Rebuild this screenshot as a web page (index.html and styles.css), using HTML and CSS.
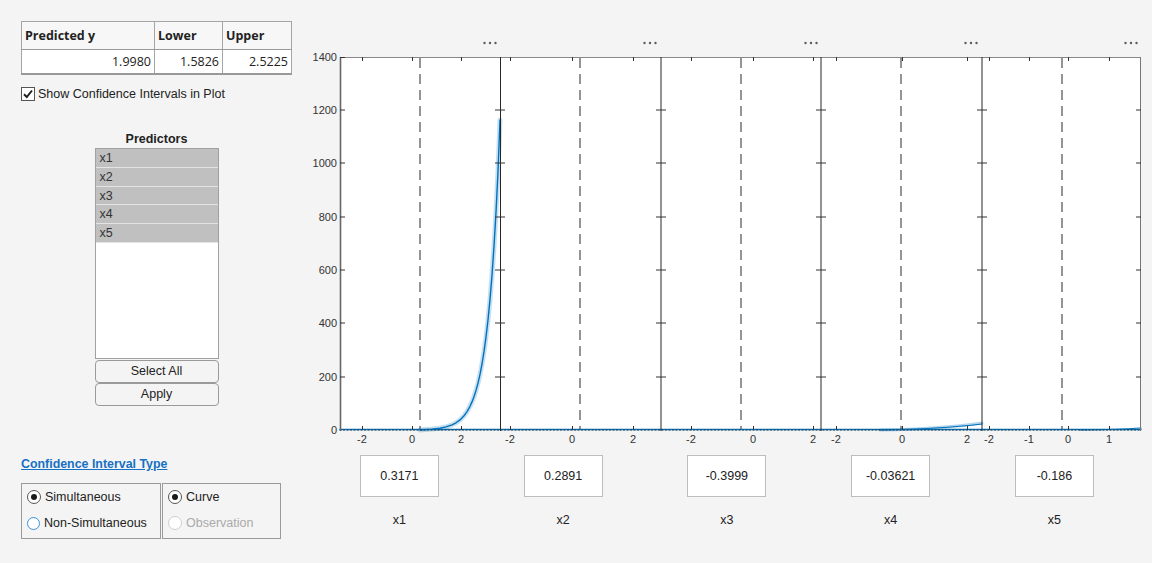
FILE: index.html
```html
<!DOCTYPE html>
<html>
<head>
<meta charset="utf-8">
<link rel="stylesheet" href="styles.css">
</head>
<body>
<div class="app">
  <div class="left">
    <table class="result">
      <tr class="head"><th class="c1">Predicted y</th><th class="c2">Lower</th><th class="c3">Upper</th></tr>
      <tr><td>1.9980</td><td>1.5826</td><td>2.5225</td></tr>
    </table>
    <label class="check">
      <span class="box"><svg width="14" height="14" viewBox="0 0 14 14"><rect x="0.5" y="0.5" width="13" height="13" fill="#fff" stroke="#555"/><path d="M3 7.2 L5.8 10 L11 3.5" fill="none" stroke="#222" stroke-width="2"/></svg></span>
      Show Confidence Intervals in Plot
    </label>
    <div class="predictors">
      <div class="ptitle">Predictors</div>
      <div class="listbox">
        <div class="item">x1</div>
        <div class="item">x2</div>
        <div class="item">x3</div>
        <div class="item">x4</div>
        <div class="item">x5</div>
      </div>
      <div class="btn">Select All</div>
      <div class="btn">Apply</div>
    </div>
    <div class="citype">Confidence Interval Type</div>
    <div class="groups">
      <div class="group g1">
        <div class="radio"><span class="rb on"></span>Simultaneous</div>
        <div class="radio"><span class="rb focus"></span>Non-Simultaneous</div>
      </div>
      <div class="group g2">
        <div class="radio"><span class="rb on"></span>Curve</div>
        <div class="radio dis"><span class="rb off"></span>Observation</div>
      </div>
    </div>
  </div>
  <div class="right">
    <svg class="chart" width="852" height="445" viewBox="300 0 852 445">
      <g fill="#fff"><rect x="340" y="57" width="801" height="373"/></g>
      <!-- dashed reference lines -->
      <g stroke="#7a7a7a" stroke-width="1.6" stroke-dasharray="10 6">
        <line x1="420" y1="58" x2="420" y2="430"/>
        <line x1="580" y1="58" x2="580" y2="430"/>
        <line x1="741" y1="58" x2="741" y2="430"/>
        <line x1="901" y1="58" x2="901" y2="430"/>
        <line x1="1062" y1="58" x2="1062" y2="430"/>
      </g>
      <!-- curves -->
      <g fill="none" stroke-linejoin="round" stroke-linecap="round">
        <polyline stroke="rgba(0,114,189,0.22)" stroke-width="5" points="420,430 432,429.1 440,428.2 446,426.9 452,424.9 456,422.8 460,419.9 464,415.8 467,411.6 470,406.3 472,401.9 474,396.7 476,390.4 478,383.1 480,374.4 482,364 484,351.7 486,337.2 488,319.9 490,299.4 492,275.1 494,246.3 496,212.2 498,171.6 500,120"/>
        <polyline stroke="#0072BD" stroke-width="1.4" points="420,430 432,429.1 440,428.2 446,426.9 452,424.9 456,422.8 460,419.9 464,415.8 467,411.6 470,406.3 472,401.9 474,396.7 476,390.4 478,383.1 480,374.4 482,364 484,351.7 486,337.2 488,319.9 490,299.4 492,275.1 494,246.3 496,212.2 498,171.6 500,120"/>
        <path d="M880 430 Q940 429 982 423" stroke="rgba(0,114,189,0.3)" stroke-width="3"/>
        <path d="M880 430 Q940 429 982 424" stroke="#0072BD" stroke-width="1.2"/>
        <path d="M1080 430 Q1120 429.5 1141 428" stroke="#0072BD" stroke-width="1.2"/>
        <line x1="340" y1="429.5" x2="1141" y2="429.5" stroke="#0072BD" stroke-width="1.4"/>
        <line x1="340" y1="430" x2="1141" y2="430" stroke="#333" stroke-width="1" stroke-dasharray="1 2.5"/>
      </g>
      <!-- frame -->
      <g stroke="#262626" fill="none">
        <line x1="340.5" y1="57" x2="340.5" y2="431" stroke="#666" stroke-width="1.6"/>
        <line x1="340" y1="57.5" x2="1141" y2="57.5" stroke="#888"/>
        <line x1="1140.5" y1="57" x2="1140.5" y2="431" stroke="#777"/>
        <line x1="500.5" y1="57" x2="500.5" y2="431"/>
        <line x1="661" y1="57" x2="661" y2="431"/>
        <line x1="821" y1="57" x2="821" y2="431"/>
        <line x1="982" y1="57" x2="982" y2="431"/>
      </g>
      <!-- y ticks -->
      <g stroke="#333" stroke-width="1">
        <path d="M340 110h5M340 163h5M340 217h5M340 270h5M340 323h5M340 377h5M340 57.5h5"/>
        <path d="M495 110h10M495 163h10M495 217h10M495 270h10M495 323h10M495 377h10"/>
        <path d="M656 110h10M656 163h10M656 217h10M656 270h10M656 323h10M656 377h10"/>
        <path d="M816 110h10M816 163h10M816 217h10M816 270h10M816 323h10M816 377h10"/>
        <path d="M977 110h10M977 163h10M977 217h10M977 270h10M977 323h10M977 377h10"/>
        <path d="M1136 110h5M1136 163h5M1136 217h5M1136 270h5M1136 323h5M1136 377h5"/>
      </g>
      <!-- x ticks -->
      <g stroke="#333" stroke-width="1">
        <path d="M362.5 57v4M412.5 57v4M461.5 57v4M510.5 57v4M572.5 57v4M633.5 57v4M691.5 57v4M753.5 57v4M813.5 57v4M836.5 57v4M902.5 57v4M967.5 57v4M989.5 57v4M1029.5 57v4M1068.5 57v4M1109.5 57v4"/>
        <path d="M362.5 430v-4M412.5 430v-4M461.5 430v-4M510.5 430v-4M572.5 430v-4M633.5 430v-4M691.5 430v-4M753.5 430v-4M813.5 430v-4M836.5 430v-4M902.5 430v-4M967.5 430v-4M989.5 430v-4M1029.5 430v-4M1068.5 430v-4M1109.5 430v-4"/>
      </g>
      <!-- y labels -->
      <g class="tl" text-anchor="end">
        <text x="337" y="61">1400</text>
        <text x="337" y="114">1200</text>
        <text x="337" y="167">1000</text>
        <text x="337" y="221">800</text>
        <text x="337" y="274">600</text>
        <text x="337" y="327">400</text>
        <text x="337" y="381">200</text>
        <text x="337" y="434">0</text>
      </g>
      <!-- x labels -->
      <g class="tl" text-anchor="middle">
        <text x="362" y="443">-2</text>
        <text x="412" y="443">0</text>
        <text x="461" y="443">2</text>
        <text x="510" y="443">-2</text>
        <text x="572" y="443">0</text>
        <text x="633" y="443">2</text>
        <text x="691" y="443">-2</text>
        <text x="753" y="443">0</text>
        <text x="813" y="443">2</text>
        <text x="836" y="443">-2</text>
        <text x="902" y="443">0</text>
        <text x="967" y="443">2</text>
        <text x="989" y="443">-2</text>
        <text x="1029" y="443">-1</text>
        <text x="1068" y="443">0</text>
        <text x="1109" y="443">1</text>
      </g>
      <!-- ellipsis menus -->
      <g fill="#5a5a5a">
        <circle cx="484.5" cy="43" r="1.2"/><circle cx="490" cy="43" r="1.2"/><circle cx="495.5" cy="43" r="1.2"/>
        <circle cx="644.5" cy="43" r="1.2"/><circle cx="650" cy="43" r="1.2"/><circle cx="655.5" cy="43" r="1.2"/>
        <circle cx="805.5" cy="43" r="1.2"/><circle cx="811" cy="43" r="1.2"/><circle cx="816.5" cy="43" r="1.2"/>
        <circle cx="965.5" cy="43" r="1.2"/><circle cx="971" cy="43" r="1.2"/><circle cx="976.5" cy="43" r="1.2"/>
        <circle cx="1125.5" cy="43" r="1.2"/><circle cx="1131" cy="43" r="1.2"/><circle cx="1136.5" cy="43" r="1.2"/>
      </g>
    </svg>
    <div class="values">
      <div class="vcol"><div class="vbox">0.3171</div><div class="vlabel">x1</div></div>
      <div class="vcol"><div class="vbox">0.2891</div><div class="vlabel">x2</div></div>
      <div class="vcol"><div class="vbox">-0.3999</div><div class="vlabel">x3</div></div>
      <div class="vcol"><div class="vbox">-0.03621</div><div class="vlabel">x4</div></div>
      <div class="vcol"><div class="vbox">-0.186</div><div class="vlabel">x5</div></div>
    </div>
  </div>
</div>
</body>
</html>
```

FILE: styles.css
```css
html, body {
  margin: 0;
  padding: 0;
  background: #f4f4f4;
}
body {
  font-family: "Liberation Sans", Arial, sans-serif;
  font-size: 12.5px;
  color: #222;
}
.app {
  display: flex;
  width: 1152px;
  height: 563px;
  overflow: hidden;
}
.left {
  width: 270px;
  padding: 21px 9px 0 21px;
  display: flex;
  flex-direction: column;
}
.result {
  border-collapse: collapse;
  width: 271px;
  font-family: "Open Sans", "Noto Sans", sans-serif;
  font-size: 12.5px;
  color: #222;
  border: 1px solid #999;
}
.result th {
  height: 27px;
  text-align: left;
  font-weight: 700;
  padding: 0 0 0 3px;
  background: #f7f7f7;
  border: 1px solid #a5a5a5;
  border-bottom: 1px solid #999;
}
.result th.c1 { width: 129px; }
.result th.c2 { width: 64px; }
.result td {
  height: 23px;
  text-align: right;
  padding: 0 3px 0 0;
  background: #fff;
  border: 1px solid #a5a5a5;
  border-bottom: 2px solid #999;
}
.check {
  display: flex;
  align-items: center;
  height: 14px;
  margin-top: 12px;
  gap: 3px;
  color: #222;
}
.box { display: flex; }
.predictors {
  margin-top: 30px;
  display: flex;
  flex-direction: column;
  align-items: center;
  width: 271px;
}
.ptitle {
  font-weight: 700;
  line-height: 16px;
  height: 16px;
  margin-bottom: 1px;
}
.listbox {
  width: 122px;
  height: 209px;
  background: #fff;
  border: 1px solid #a0a0a0;
}
.item {
  height: 17.75px;
  line-height: 18px;
  background: #c0c0c0;
  border-bottom: 1px solid #e4e4e4;
  padding-left: 4px;
  color: #333;
}
.btn {
  width: 122px;
  height: 21px;
  line-height: 21px;
  text-align: center;
  border: 1px solid #9a9a9a;
  border-radius: 4px;
  background: #f4f4f4;
  color: #222;
  margin-top: 1px;
}
.btn + .btn { margin-top: 0; }
.citype {
  margin-top: 51px;
  font-weight: 700;
  font-size: 12.4px;
  line-height: 15px;
  color: #1670c4;
  text-decoration: underline;
}
.groups {
  display: flex;
  margin-top: 11px;
  gap: 1px;
}
.group {
  border: 1px solid #9a9a9a;
  display: flex;
  flex-direction: column;
  justify-content: space-between;
  padding: 5px 0 7px 5px;
  box-sizing: border-box;
  height: 56px;
}
.g1 { width: 140px; }
.g2 { width: 119px; }
.radio {
  display: flex;
  align-items: center;
  gap: 4px;
  height: 16px;
  color: #222;
}
.radio.dis { color: #aaa; }
.rb {
  width: 12px;
  height: 12px;
  border-radius: 50%;
  border: 1px solid #555;
  background: #fff;
  position: relative;
  box-sizing: content-box;
}
.rb.on::after {
  content: "";
  position: absolute;
  left: 3px;
  top: 3px;
  width: 6px;
  height: 6px;
  border-radius: 50%;
  background: #1a1a1a;
}
.rb.focus { border: 1.5px solid #3d91d8; width: 11px; height: 11px; }
.rb.off { border-color: #cfcfcf; }
.right {
  width: 852px;
  display: flex;
  flex-direction: column;
}
.chart { display: block; }
.tl text {
  font-family: "Liberation Sans", Arial, sans-serif;
  font-size: 11px;
  fill: #333;
}
.values {
  display: grid;
  grid-template-columns: repeat(5, 163.75px);
  margin-left: 17.5px;
  margin-top: 10px;
}
.vcol {
  display: flex;
  flex-direction: column;
  align-items: center;
}
.vbox {
  width: 77px;
  height: 40px;
  line-height: 40px;
  border: 1px solid #bdbdbd;
  background: #fff;
  text-align: center;
  color: #222;
}
.vlabel {
  margin-top: 15px;
  line-height: 16px;
  color: #222;
}
```
